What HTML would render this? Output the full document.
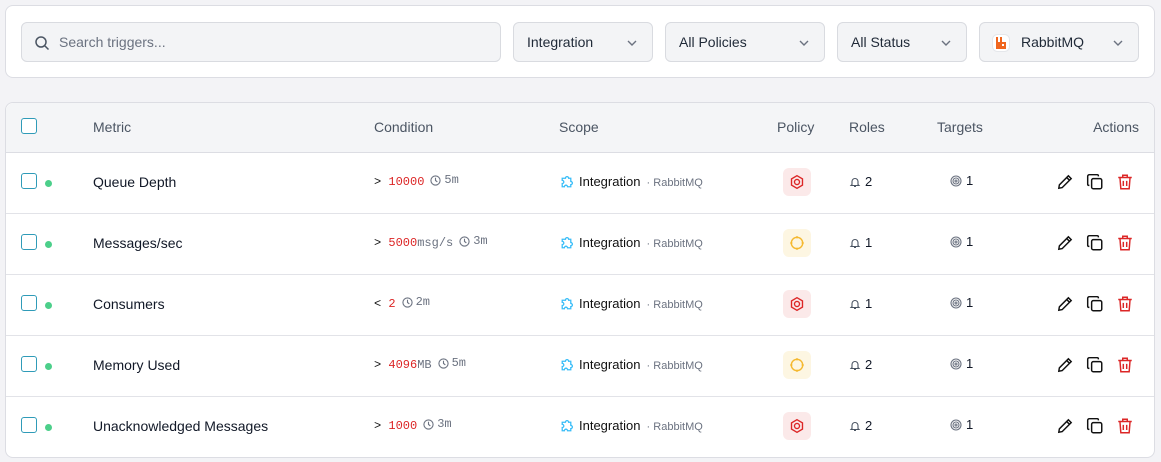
<!DOCTYPE html>
<html><head><meta charset="utf-8"><style>
*{box-sizing:border-box;margin:0;padding:0}
body{width:1161px;height:462px;background:#f3f3f6;font-family:"Liberation Sans",sans-serif;color:#111827;position:relative;overflow:hidden}
.card{position:absolute;left:5px;width:1150px;background:#fff;border:1px solid #dcdde3;border-radius:8px}
.inp{position:absolute;top:22px;height:40px;background:#f3f4f6;border:1px solid #d9dbe0;border-radius:6px;font-size:14px;color:#1f2937;line-height:38px}
.inp .chev{position:absolute;right:14px;top:14px}
.hdr{position:absolute;top:0;left:0;right:0;height:50px;background:#f4f5f7;border-bottom:1px solid #dcdde3;border-radius:8px 8px 0 0;font-size:14px;color:#4b5563}
.hdr span,.row span{position:absolute}
.row{position:absolute;left:0;right:0;height:61px;border-bottom:1px solid #e2e3e8;font-size:14px}
.cb{position:absolute;left:15px;width:16px;height:16px;border:1.5px solid #2f9bb8;border-radius:3px;background:#fff}
.dot{left:39px;top:27px;width:7px;height:7px;border-radius:50%;background:#4ccf8a}
.mono{font-family:"Liberation Mono",monospace;font-size:12px}
.badge{left:777px;top:15px;width:28px;height:28px;border-radius:6px}
svg{position:absolute}
</style></head><body>
<div class="card" style="top:5px;height:73px"></div>
<div class="inp" style="left:21px;width:480px;color:#6b7280;padding-left:37px">Search triggers...
<svg style="left:12px;top:12px" width="16" height="16" viewBox="0 0 16 16" fill="none" stroke="#4b5563" stroke-width="1.5"><circle cx="7" cy="7" r="5"/><path d="M11 11l3.5 3.5"/></svg></div>
<div class="inp" style="left:513px;width:140px;padding-left:13px">Integration<svg class="chev" width="12" height="12" viewBox="0 0 12 12" fill="none" stroke="#6b7280" stroke-width="1.4"><path d="M2 4l4 4 4-4"/></svg></div>
<div class="inp" style="left:665px;width:160px;padding-left:13px">All Policies<svg class="chev" width="12" height="12" viewBox="0 0 12 12" fill="none" stroke="#6b7280" stroke-width="1.4"><path d="M2 4l4 4 4-4"/></svg></div>
<div class="inp" style="left:837px;width:130px;padding-left:13px">All Status<svg class="chev" width="12" height="12" viewBox="0 0 12 12" fill="none" stroke="#6b7280" stroke-width="1.4"><path d="M2 4l4 4 4-4"/></svg></div>
<div class="inp" style="left:979px;width:160px;padding-left:41px">RabbitMQ
<svg style="left:12px;top:11px" width="18" height="18" viewBox="0 0 18 18"><rect x="0.5" y="0.5" width="17" height="17" rx="5" fill="#fff" stroke="#e5e7eb"/><path d="M4 3h2v5h2V3h2v5h4v7H4z" fill="#f0661f"/><rect x="10" y="10" width="2" height="2" fill="#fff"/></svg>
<svg class="chev" width="12" height="12" viewBox="0 0 12 12" fill="none" stroke="#6b7280" stroke-width="1.4"><path d="M2 4l4 4 4-4"/></svg></div>

<div class="card" style="top:102px;height:356px;overflow:hidden">
<div class="hdr">
<div class="cb" style="top:15px"></div>
<span style="left:87px;top:16px">Metric</span>
<span style="left:368px;top:16px">Condition</span>
<span style="left:553px;top:16px">Scope</span>
<span style="left:771px;top:16px">Policy</span>
<span style="left:843px;top:16px">Roles</span>
<span style="left:931px;top:16px">Targets</span>
<span style="right:15px;top:16px">Actions</span>
</div>
<div id="rows"></div>
</div>
<script>
var data=[["Queue Depth",">","10000","","5m","r","2"],["Messages/sec",">","5000","msg/s","3m","y","1"],["Consumers","<","2","","2m","r","1"],["Memory Used",">","4096","MB","5m","y","2"],["Unacknowledged Messages",">","1000","","3m","r","2"]];
var h="";
data.forEach(function(d,i){
var top=50+i*61;
var badge=d[5]=="r"?'<span class="badge" style="background:#fbe9e9"><svg style="left:6px;top:6px" width="16" height="16" viewBox="0 0 14 14" fill="none" stroke="#dc2626" stroke-width="1.2"><path d="M7 1.5l4.8 2.75v5.5L7 12.5 2.2 9.75v-5.5z"/><circle cx="7" cy="7" r="2.2"/></svg></span>':'<span class="badge" style="background:#fdf6e2"><svg style="left:6px;top:6px" width="16" height="16" viewBox="0 0 14 14" fill="none" stroke="#f5b82e" stroke-width="1.2"><circle cx="7" cy="7" r="5"/><path d="M7 1v2M7 11v2M1 7h2M11 7h2"/></svg></span>';
h+='<div class="row" style="top:'+top+'px"><div class="cb" style="top:20px"></div><span class="dot"></span>'+
'<span style="left:87px;top:21px;color:#111827">'+d[0]+'</span>'+
'<span class="mono" style="left:368px;top:22px;color:#111"><b style="font-weight:normal">'+d[1]+'</b> <span style="position:static;color:#dc2626">'+d[2]+'</span><span style="position:static;color:#6b7280">'+d[3]+'</span></span>'+
'<span class="mono" style="left:'+(368+ (d[1].length+1+d[2].length+d[3].length)*7.2+6)+'px;top:20px;color:#6b7280;padding-left:14px"><svg style="left:0;top:2px" width="11" height="11" viewBox="0 0 12 12" fill="none" stroke="#6b7280" stroke-width="1.2"><circle cx="6" cy="6" r="5"/><path d="M6 3v3l2 1.5"/></svg>'+d[4]+'</span>'+
'<svg style="left:553px;top:22px" width="15" height="15" viewBox="0 0 14 14" fill="none" stroke="#38bdf8" stroke-width="1.2"><path d="M3 3h3a1.5 1.5 0 0 1 3 0h2v3a1.5 1.5 0 0 1 0 3v2H8a1.5 1.5 0 0 0-3 0H3V8a1.5 1.5 0 0 0 0-3z"/></svg>'+
'<span style="left:573px;top:21px;font-size:13px;color:#111">Integration<span style="position:static;font-size:11px;color:#6b7280">&nbsp; · RabbitMQ</span></span>'+badge+
'<svg style="left:843px;top:23px" width="12" height="12" viewBox="0 0 12 12" fill="none" stroke="#4b5563" stroke-width="1.1"><path d="M3 8.5V5.5a3 3 0 0 1 6 0v3l1 1H2z M5 10.5h2"/></svg>'+
'<span style="left:859px;top:21px;font-size:13px">'+d[6]+'</span>'+
'<svg style="left:944px;top:22px" width="12" height="12" viewBox="0 0 12 12" fill="none" stroke="#6b7280" stroke-width="1.1"><circle cx="6" cy="6" r="5"/><circle cx="6" cy="6" r="3"/><circle cx="6" cy="6" r="1"/></svg>'+
'<span style="left:960px;top:20px;font-size:13px">1</span>'+
'<svg style="left:1050px;top:20px" width="18" height="18" viewBox="0 0 16 16" fill="none" stroke="#111" stroke-width="1.3"><path d="M11 2.5l2.5 2.5L5.5 13 2.5 13.5 3 10.5z M9.5 4l2.5 2.5"/></svg>'+
'<svg style="left:1080px;top:20px" width="18" height="18" viewBox="0 0 16 16" fill="none" stroke="#111" stroke-width="1.3"><rect x="5" y="5" width="9" height="9" rx="1.5"/><path d="M11 3V2.5A1 1 0 0 0 10 1.5H3A1.5 1.5 0 0 0 1.5 3v7a1 1 0 0 0 1 1H3"/></svg>'+
'<svg style="left:1110px;top:20px" width="18" height="18" viewBox="0 0 16 16" fill="none" stroke="#dc2626" stroke-width="1.3"><path d="M2 4h12M6 4V2h4v2M3.5 4l.8 10h7.4l.8-10M6.5 7v4.5M9.5 7v4.5"/></svg>'+
'</div>';});
document.getElementById("rows").innerHTML=h;
</script>
</body></html>
